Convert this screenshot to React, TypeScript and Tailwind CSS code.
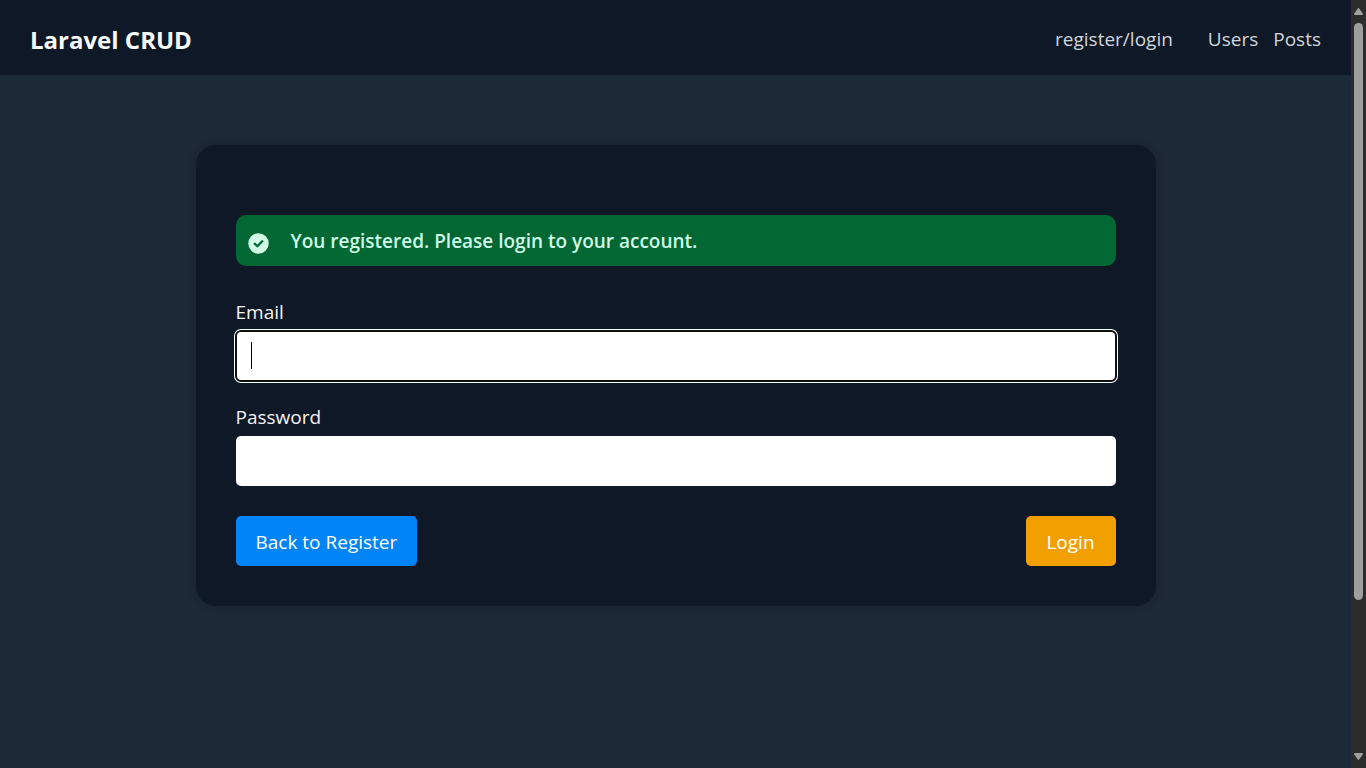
import { ReactNode } from "react";

function NavLink({ href, children }: { href: string; children: ReactNode }) {
  return (
    <a href={href} className="text-[#d1d5dc] hover:text-white">
      {children}
    </a>
  );
}

function Header() {
  return (
    <header className="flex h-[75px] items-center justify-between bg-[#0f1826] px-[30px] pt-[4px]">
      <a href="#home" className="text-2xl leading-[36px] font-bold text-[#f9fafb]">
        Laravel CRUD
      </a>
      <nav className="flex items-center gap-[35px] text-[19px]">
        <NavLink href="#auth">register/login</NavLink>
        <div className="flex gap-[15px]">
          <NavLink href="#users">Users</NavLink>
          <NavLink href="#posts">Posts</NavLink>
        </div>
      </nav>
    </header>
  );
}

function Alert({ children }: { children: ReactNode }) {
  return (
    <div role="status" className="flex h-[51px] items-center gap-[20px] rounded-[10px] bg-[#016834] px-[10px] pt-[2px] text-[#d0fae5]">
      <svg viewBox="0 0 24 24" className="mt-[4px] size-[25px]" fill="none" aria-hidden="true">
        <circle cx="12" cy="12" r="9.8" fill="currentColor" />
        <path d="M8.4 12.2l2.5 2.4 4.7-4.7" stroke="#016834" strokeWidth="2.2" strokeLinecap="round" strokeLinejoin="round" />
      </svg>
      <p className="text-[19px] font-semibold">{children}</p>
    </div>
  );
}

function LoginForm() {
  const field = "block h-[50px] w-full rounded-[5px] bg-white px-[15px] text-[19px] text-black";
  return (
    <form className="mt-[30px] text-[19px]">
      <label htmlFor="email" className="block h-[35px] leading-[32px] text-[#f3f4f6]">
        Email
      </label>
      <div className="relative">
        <input
          id="email"
          type="email"
          autoFocus
          className={`${field} caret-transparent ring-2 ring-white outline-2 -outline-offset-1 outline-[#101010]`}
        />
        <span aria-hidden="true" className="absolute top-[11px] left-[15px] h-[27px] w-px bg-black" />
      </div>
      <label htmlFor="password" className="mt-[20px] block h-[35px] leading-[32px] text-[#f3f4f6]">
        Password
      </label>
      <input id="password" type="password" className={field} />
      <div className="mt-[30px] flex justify-between">
        <button type="button" className="h-[50px] rounded-[5px] bg-[#0084f8] px-[20px] pt-[2px] text-white">
          Back to Register
        </button>
        <button type="submit" className="h-[50px] min-w-[90px] rounded-[5px] bg-[#f29f02] px-[20px] pt-[2px] text-white">
          Login
        </button>
      </div>
    </form>
  );
}

function Scrollbar() {
  return (
    <div aria-hidden="true" className="flex w-[15px] shrink-0 flex-col items-center bg-[#2c2c2c] py-[8px]">
      <svg viewBox="0 0 9 7" className="h-[7px] w-[9px]" fill="#9f9f9f">
        <path d="M3.8.5Q4.5-.3 5.2.5L8.8 5.6Q9.2 7 8 7H1Q-.2 7 .2 5.6Z" />
      </svg>
      <div className="mt-[8px] flex grow flex-col">
        <div className="h-[79%] w-[9px] rounded-full bg-[#9f9f9f]" />
      </div>
      <svg viewBox="0 0 9 7" className="h-[7px] w-[9px]" fill="#9f9f9f">
        <path d="M3.8 6.5Q4.5 7.3 5.2 6.5L8.8 1.4Q9.2 0 8 0H1Q-.2 0 .2 1.4Z" />
      </svg>
    </div>
  );
}

export default function App() {
  return (
    <div className="flex h-screen bg-[#1c2936] font-['Open_Sans','Noto_Sans',sans-serif]">
      <div className="min-w-0 grow overflow-hidden">
        <Header />
        <main className="px-[30px] pt-[70px]">
          <section className="mx-auto max-w-[960px] rounded-[20px] bg-[#0f1826] px-[40px] pt-[70px] pb-[40px] shadow-[0_0_10px_rgba(0,0,0,0.2)]">
            <Alert>You registered. Please login to your account.</Alert>
            <LoginForm />
          </section>
        </main>
      </div>
      <Scrollbar />
    </div>
  );
}
